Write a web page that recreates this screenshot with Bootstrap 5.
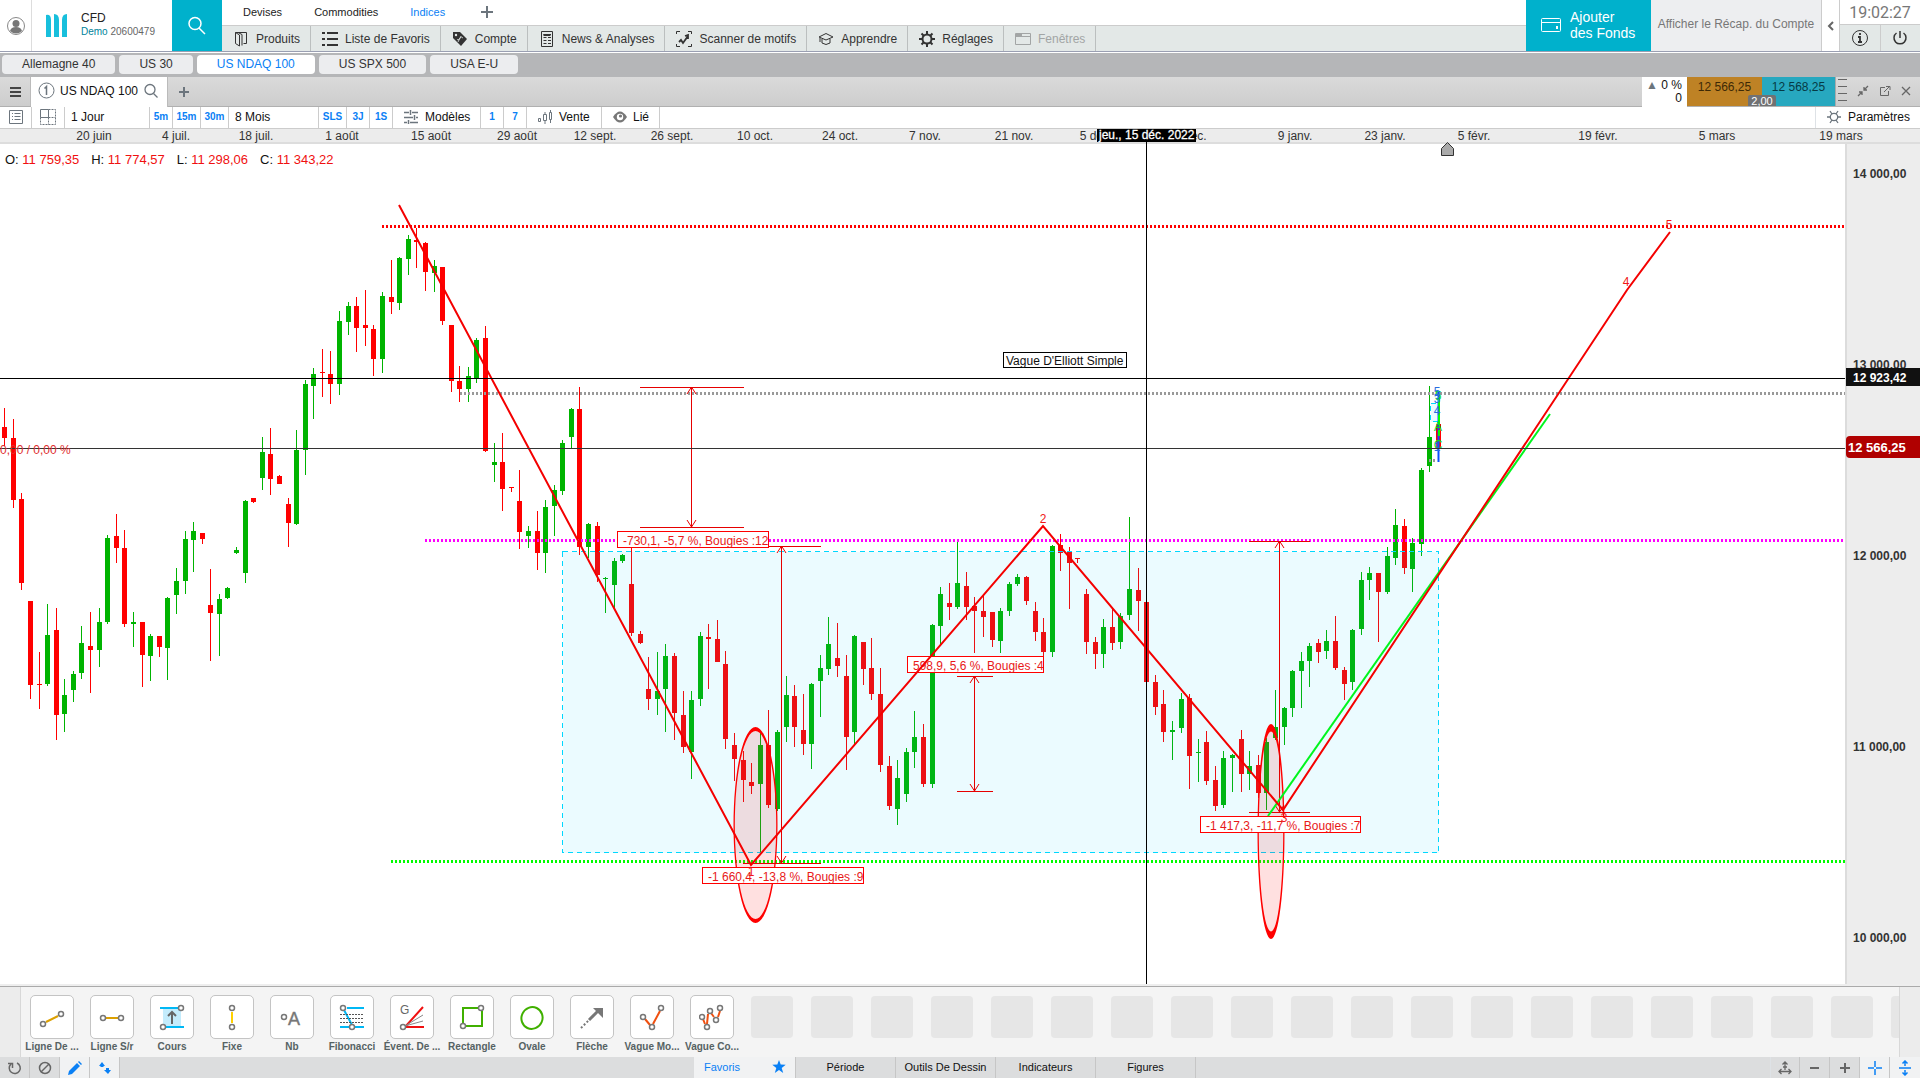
<!DOCTYPE html>
<html lang="fr">
<head>
<meta charset="utf-8">
<meta name="viewport" content="width=device-width, initial-scale=1">
<title>US NDAQ 100 - CFD</title>
<link href="https://cdn.jsdelivr.net/npm/bootstrap@5.3.0/dist/css/bootstrap.min.css" rel="stylesheet">
<style>
body{font-family:"Liberation Sans",Arial,sans-serif;font-size:12px;line-height:16px;color:#222;background:#fff;height:100vh;overflow:hidden}
button,select,a{font:inherit;color:inherit;text-decoration:none}
button{background:none;border:0;padding:0}
svg{display:block;flex:none}
.ln{fill:none;stroke:currentColor}
.top-head{height:53px;border-bottom:1px solid #fff;box-shadow:inset 0 -1px #9a9fb2;padding-bottom:1px}
.user-cell{width:32px;border-right:1px solid #ddd;color:#888}
.brand-cell{width:140px;padding:0 0 4px 14px;gap:13px}
.acct{font-size:10px;line-height:12px;color:#666}.acct b{font-weight:400;color:#00839b}
.aqua{background:#00b1cc;color:#fff}
.find-cell{width:50px}
.cat-row{height:26px;border-bottom:1px solid #ccc;font-size:11px;padding:0 21px 2px;gap:32px}
.menu-row{background:#e3e8e7;height:25px}
.menu-row>button{padding:0 10px 0 11px;gap:7px;border-right:1px solid #bbbfbf;color:#333}
.menu-row .off{color:#a2a5a5}
.azure{color:#0a80f5!important}
.fund{width:125px;padding:0 0 2px 15px;font-size:14px;line-height:16px;text-align:left;gap:9px}
.recap{width:171px;background:#edeef0;color:#777;border-right:1px solid #ccc!important;padding-bottom:3px!important}
.chev{width:18px;color:#666;border-right:1px solid #ccc!important}
.clock-col{width:80px}
.clock{height:25px;font:16px Roboto,sans-serif;line-height:26px;color:#777;border-bottom:1px solid #ccc}
.clock-col .pair>button{background:#e3e8e7;color:#333}
.clock-col .pair>button+button{border-left:1px solid #ccc}
.desk{height:24px;background:#b5b6b8;padding:2px 2px 3px;gap:4px}
.desk>button{background:#ecedef;border-radius:4px;padding:0 20px 2px;color:#333}
.desk>button.now{background:#fff}
.win{height:30px;background:linear-gradient(#dadada,#cdcdcd);border-bottom:1px solid #b0b0b0}
.win>*{height:29px}
.burger{width:31px;border-right:1px solid #bbb!important;color:#444}
.win-tab{background:#fff;width:137px;height:30px!important;color:#111;padding:0 0 3px 7px;gap:5px;border-right:1px solid #bbb}
.chg{width:45px;background:#fff;line-height:13px;color:#111;padding:2px 5px 0 0;height:30px!important}
.bid,.ask{padding-bottom:9px!important}
.bid{width:75px;background:#be8225;color:#3d2905}.ask{width:73px;background:#27a8bf;color:#063a44}
.spread{right:144px;bottom:0;width:28px;height:11px!important;background:#707173;color:#fff;font-size:11px;line-height:12px;text-align:center;border-radius:2px 2px 0 0;z-index:2}
.win-ico{width:85px;border-left:1px solid #aaa;color:#666;padding:0 8px 2px 2px}
.bar{height:22px;border-bottom:1px solid #ccc;color:#111;background:#fff}
.bar>*{border:0;border-right:1px solid #ccc;height:21px;padding-bottom:2px}
.bar select{appearance:none;background:#fff;padding:0 6px 2px;outline:0;color:#111}
.mini{font-size:10px;font-weight:700;color:#0a80f5;text-align:center}
.w23{width:23px}.w28{width:28px}.w27{width:28px}
.chart-box{min-height:0}
.chart-box svg{width:100%;height:100%;overflow:hidden}
.ohlc{left:5px;top:23px;font-size:13px;gap:12px;color:#111}
.ohlc span span{color:#f01010}
.shelf{background:#f4f4f4;border-top:1px solid #aaa;box-shadow:0 -2px #eee;height:71px;margin-top:2px}
.edge{width:21px;background:#ececec;flex:none}
.edge-l{border-right:1px solid #d8d8d8}.edge-r{border-left:1px solid #d8d8d8}
.slots{padding:8px 0 0 1px}
.slot{width:60px;flex:none;font-size:10px;font-weight:700;color:#566263;line-height:12px;white-space:nowrap}
.slot i{display:flex;width:44px;height:44px;border:1px solid #c4c4c4;border-radius:5px;background:#fff;align-items:center;justify-content:center;margin-bottom:2px;font-style:normal}
.slot em{display:block;width:42px;height:42px;border-radius:4px;background:#e6e6e6;margin-top:1px}
.foot{height:21px;background:#dcddde;margin-bottom:2px;font-size:11px;color:#111}
.foot button{border-right:1px solid #c6c6c6;width:30px;color:#666}
.foot button.wide{width:100px;color:#111;padding-bottom:2px}
.foot button.fav{width:102px;padding:0 9px 2px 10px}
.foot .lit{background:#f1f2f3}
</style>
</head>
<body class="d-flex flex-column">
<header class="top-head d-flex">
  <button class="user-cell d-flex align-items-center justify-content-center" aria-label="Profil"><svg width="20" height="20"><circle class="ln" cx="10" cy="10" r="8.500"/><circle cx="10" cy="7.500" r="3.500" fill="#777"/><path d="M4 15q1-4 6-4t6 4q-6 5-12 0z" fill="#777"/></svg></button>
  <div class="brand-cell d-flex align-items-center">
    <svg class="mt-1" width="22" height="24" fill="#18bfdc"><path d="M0 1q5-1 5 5v17H0zM8 0q5 0 5 6v17H8zM21 0q-5 0-5 6v17h5z"/></svg>
    <div><div>CFD</div><div class="acct"><b>Demo</b> 20600479</div></div>
  </div>
  <button class="find-cell aqua d-flex align-items-center justify-content-center" aria-label="Rechercher"><svg width="20" height="20"><circle class="ln" cx="8" cy="7.500" r="6" stroke-width="1.500"/><path class="ln" d="M12 12l6 6" stroke-width="1.500"/></svg></button>
  <div class="flex-grow-1 d-flex flex-column">
    <nav class="cat-row d-flex align-items-center"><a href="#">Devises</a><a href="#">Commodities</a><a href="#" class="azure">Indices</a><button aria-label="Ajouter un onglet"><svg width="20" height="14" class="ln text-secondary" stroke-width="2"><path d="M10 1v12M4 7h12"/></svg></button></nav>
    <nav class="menu-row d-flex">
      <button class="d-flex align-items-center"><svg width="16" height="16" class="ln"><path d="M2.500 1.500h11v11h-3M2.500 1.500v11l4 2.500V4z M5 1.500l4 2v11"/></svg>Produits</button>
      <button class="d-flex align-items-center"><svg width="16" height="16" class="ln" stroke-width="2"><path d="M0 2h3M0 8h3M0 14h3M5 2h11M5 8h11M5 14h11"/></svg>Liste de Favoris</button>
      <button class="d-flex align-items-center"><svg width="16" height="16"><path d="M1 1h7l7 7-6 7-8-8z" fill="#333"/><circle cx="4" cy="4" r="1.200" fill="#e3e8e7"/><path d="M11 7q-2-2-3 0t-2 2q-1 0 0-1M9 5L6 11" stroke="#e3e8e7" fill="none" stroke-width=".8"/></svg>Compte</button>
      <button class="d-flex align-items-center"><svg width="16" height="16" class="ln"><path d="M2.500.5h11v15h-11zM4.500 3.500h3M9 3.500h3M4.500 6.500h3M9 6.500h3M4.500 9.500h3M9 9.500h3M4.500 12.500h3M9 12.500h3" /><path d="M4.500 4h7" stroke-width="2"/></svg>News &amp; Analyses</button>
      <button class="d-flex align-items-center"><svg width="16" height="16" class="ln"><path d="M.5 3V.5H4M12 .5h3.500V3M.5 13v2.500H4M12 15.500h3.500V13"/><path d="M3 11l2-2 2 3 5-7M9 5l3-1v4" stroke-width="1.800"/></svg>Scanner de motifs</button>
      <button class="d-flex align-items-center"><svg width="16" height="16" class="ln"><path d="M1 6l7-3.500L15 6 8 9zM4 8v4q4 3 8 0V8M2 7v4"/></svg>Apprendre</button>
      <button class="d-flex align-items-center"><svg width="16" height="16" class="ln"><circle cx="8" cy="8" r="4.500" stroke-width="2"/><path d="M8 0v3M8 13v3M0 8h3M13 8h3M2.500 2.500l2 2M11.500 11.500l2 2M13.500 2.500l-2 2M4.500 11.500l-2 2" stroke-width="2"/></svg>Réglages</button>
      <button class="off d-flex align-items-center" disabled><svg width="16" height="16" class="ln"><path d="M.5 2.500h15v11H.5zM.5 5.500h15"/><path d="M1 4h6" stroke-width="2"/></svg>Fenêtres</button>
    </nav>
  </div>
  <button class="fund aqua d-flex align-items-center"><svg width="20" height="16" class="ln"><rect x=".5" y="1.500" width="19" height="13" rx="1"/><path d="M0 5.500h20" /><path d="M15 10.500h2" stroke-width="3"/></svg><span>Ajouter<br>des Fonds</span></button>
  <button class="recap">Afficher le Récap. du Compte</button>
  <button class="chev d-flex align-items-center justify-content-center" aria-label="Replier"><svg width="8" height="10" class="ln" stroke-width="2"><path d="M6 1L2 5l4 4"/></svg></button>
  <div class="clock-col d-flex flex-column">
    <div class="clock text-center">19:02:27</div>
    <div class="pair d-flex flex-fill">
      <button class="flex-fill d-flex align-items-center justify-content-center" aria-label="Informations"><svg width="18" height="18" class="ln"><circle cx="9" cy="9" r="7.500"/><path d="M9 4v2M7 8h2v5M7 13h4" stroke-width="1.800"/></svg></button>
      <button class="flex-fill d-flex align-items-center justify-content-center" aria-label="Quitter"><svg width="18" height="18" class="ln" stroke-width="1.500"><path d="M9 2v7M5.500 4a6 6 0 1 0 7 0"/></svg></button>
    </div>
  </div>
</header>
<nav class="desk d-flex">
  <button>Allemagne 40</button><button>US 30</button><button class="now azure">US NDAQ 100</button><button>US SPX 500</button><button>USA E-U</button>
</nav>
<div class="win d-flex position-relative">
  <button class="burger d-flex align-items-center justify-content-center" aria-label="Menu"><svg width="11" height="12" class="ln" stroke-width="2"><path d="M0 2h11M0 6h11M0 10h11"/></svg></button>
  <div class="win-tab d-flex align-items-center"><svg width="17" height="17" class="ln text-secondary"><circle cx="8.500" cy="8.500" r="7.500"/><path d="M6.500 6.500l2-2V13" stroke-width="1.500"/></svg><span>US NDAQ 100</span><svg width="16" height="16" class="ln text-secondary" stroke-width="1.300"><circle cx="7" cy="6.500" r="5" /><path d="M10.500 10.500l4 4"/></svg></div>
  <button class="px-2" aria-label="Nouvel onglet"><svg width="16" height="14" class="ln text-secondary" stroke-width="2"><path d="M8 2v10M3 7h10"/></svg></button>
  <div class="chg ms-auto text-end"><span class="text-secondary">▲</span> 0 %<br>0</div>
  <button class="bid">12 566,25</button><button class="ask">12 568,25</button>
  <div class="win-ico d-flex align-items-center justify-content-between">
    <svg width="10" height="26" class="ln"><path d="M0 1.500h9M0 8.500h9M0 15.500h9M0 22.500h9"/></svg>
    <svg width="12" height="12" class="ln"><path d="M11 1L7 5M7 2v3h3M1 11l4-4M2 7h3v3" stroke-width="1.300"/></svg>
    <svg width="12" height="12" class="ln"><path d="M6 2.500H1.500v8h8V6M5 7l5-5M7 1.500h4V5"/></svg>
    <svg width="12" height="12" class="ln" stroke-width="1.300"><path d="M2 2l8 8M10 2l-8 8"/></svg>
  </div>
  <div class="spread position-absolute">2,00</div>
</div>
<div class="bar d-flex">
  <button class="d-flex align-items-center justify-content-center" style="width:32px" aria-label="Liste"><svg width="14" height="14" class="ln text-secondary"><path d="M.5.5h13v13H.5zM3 3.500h1M3 6.500h1M3 9.500h1M5.500 3.500h6M5.500 6.500h6M5.500 9.500h6"/></svg></button>
  <button class="d-flex align-items-center justify-content-center" style="width:33px" aria-label="Grille"><svg width="16" height="16" class="ln text-secondary"><path d="M.5.5h8v8h-8z"/><path d="M8.500.5h7v15H.5v-7M8.500 8.500v7M8.500 8.500h7" stroke-dasharray="2 1"/></svg></button>
  <select aria-label="Intervalle" style="width:85px"><option>1 Jour</option></select>
  <button class="mini w23">5m</button><button class="mini w28">15m</button><button class="mini w28">30m</button>
  <select aria-label="Période" style="width:90px"><option>8 Mois</option></select>
  <button class="mini w27">SLS</button><button class="mini w23">3J</button><button class="mini w23">1S</button>
  <button class="d-flex align-items-center" style="width:88px;padding-left:11px;gap:5px"><svg width="16" height="14" class="ln text-secondary" stroke-width="1.500"><path d="M0 2.500h5M8 2.500h6M0 7.500h9M12 7.500h2M0 12.500h3M6 12.500h8M6.500 0v5M10.500 5v5M4.500 10v4"/></svg>Modèles</button>
  <button class="mini w23">1</button><button class="mini w23">7</button>
  <button class="d-flex align-items-center" style="width:75px;padding-left:10px;gap:6px"><svg width="16" height="14" class="ln text-secondary"><path d="M1.500 8.500h2v3h-2zM6.500 4.500h3v6h-3zM12.500 2.500h2v7h-2zM8 2v2M8 11v3M13.500 0v2M13.500 10v3"/></svg>Vente</button>
  <button class="d-flex align-items-center" style="width:58px;padding-left:11px;gap:6px"><svg width="14" height="12"><path d="M0 6q7-11 14 0-7 11-14 0z" fill="#777"/><circle cx="7" cy="6" r="3.200" fill="#fff"/><circle cx="7.500" cy="5" r="1.600" fill="#777"/></svg>Lié</button>
  <button class="ms-auto border-end-0 border-start d-flex align-items-center" style="width:105px;padding-left:11px;gap:7px"><svg width="14" height="14" class="ln text-secondary" stroke-width="1.300"><circle cx="7" cy="7" r="3.700"/><path d="M0 7h3M11 7h3M3 1l2 3M11 1L9 4M3 13l2-3M11 13l-2-3"/></svg>Paramètres</button>
</div>
<main class="chart-box flex-grow-1 position-relative">
  <svg id="plot" viewBox="0 129 1920 855" preserveAspectRatio="xMinYMin meet" font-family="Liberation Sans, Arial, sans-serif" font-size="12">
    <rect y="129" width="1920" height="13" fill="#ececec"/><rect y="142" width="1920" height="2" fill="#ddd"/>
    <g id="dates" text-anchor="middle" fill="#333"></g>
    <rect x="1845" y="144" width="75" height="840" fill="#ededed"/><rect x="1845" y="144" width="2" height="840" fill="#dcdcdc"/>
    <g id="prices" font-weight="700" fill="#333"></g>
    <g id="candles" shape-rendering="crispEdges"></g>
    <g fill="none" stroke-width="3" stroke-dasharray="2 2" shape-rendering="crispEdges">
      <path d="M382 226.500H1845" stroke="#f00"/><path d="M460 393.500H1845" stroke="#999"/><path d="M425 540.500H1845" stroke="#f0f"/><path d="M391 861.500H1845" stroke="#0f0"/><path d="M1429 460.500h7" stroke="#999"/>
    </g>
    <g stroke="#00d8ff" fill="#00d0ff" fill-opacity=".08" shape-rendering="crispEdges"><rect x="562.500" y="551.500" width="876" height="301" stroke-dasharray="5 4"/><rect x="1430.500" y="403.500" width="8" height="18" stroke-dasharray="5 4"/></g>
    <g fill="#f00"><ellipse cx="755.500" cy="825" rx="21" ry="96" fill-opacity=".12"/><ellipse cx="1271" cy="831.500" rx="13" ry="104" fill-opacity=".12"/>
      <path fill-rule="evenodd" d="M733.500 825a22 98 0 1 0 44 0a22 98 0 1 0-44 0zM734.800 825a20.700 94 0 1 1 41.400 0a20.700 94 0 1 1-41.400 0z"/>
      <path fill-rule="evenodd" d="M1257.500 831.500a13.500 107.500 0 1 0 27 0a13.500 107.500 0 1 0-27 0zM1258.800 831.500a12.200 100 0 1 1 24.400 0a12.200 100 0 1 1-24.400 0z"/></g>
    <g id="rulers" stroke="#e60000" fill="none"></g>
    <g id="notes"></g>
    <path d="M1268 816L1550 414" stroke="#00f51e" stroke-width="2"/>
    <path d="M399 205L751 865L1043 526L1283 810L1627 290L1670 232" fill="none" stroke="#f40000" stroke-width="2"/>
    <g fill="#f01818" text-anchor="middle"><text x="751" y="876">1</text><text x="1043" y="523">2</text><text x="1284" y="822">3</text><text x="1626" y="286">4</text><text x="1669" y="229">5</text></g>
    <path d="M1438.500 392v70" stroke="#0a50ff" stroke-width="2"/><path d="M1439 397v28M1439 430v6" stroke="#0f0" stroke-width="2"/>
    <g text-anchor="middle" font-size="12"><g fill="#00e020"><text x="1438" y="400">5</text><text x="1438" y="431">A</text><text x="1438" y="449">C</text></g><g fill="#2a6de0"><text x="1437" y="396">5</text><text x="1437" y="403">3</text><text x="1437" y="415">4</text><text x="1437" y="451">1</text></g></g>
    <path d="M0 378.500H1845" stroke="#000"/><path d="M0 448.500H1845" stroke="#333"/>
    <text x="0" y="454" fill="#e03030">0,00 / 0,00 %</text>
    <path d="M1146.500 142V984" stroke="#000"/><rect x="1097" y="129" width="99" height="13"/><text x="1099" y="139" fill="#fff" stroke="#fff" stroke-width=".3">jeu., 15 déc. 2022</text>
    <path d="M1441.500 155.500v-7l6-6 6 6v7z" fill="#aaa" stroke="#333"/>
    <rect x="1846" y="368" width="74" height="18" fill="#111"/><rect x="1846" y="436" width="78" height="22" rx="4" fill="#b00000"/>
    <g fill="#fff" font-weight="700"><text x="1853" y="382">12 923,42</text><text x="1848" y="452" font-size="13">12 566,25</text></g>
  </svg>
  <div class="ohlc position-absolute d-flex"><span>O: <span>11 759,35</span></span><span>H: <span>11 774,57</span></span><span>L: <span>11 298,06</span></span><span>C: <span>11 343,22</span></span></div>
</main>
<section class="shelf d-flex"><div class="edge edge-l"></div><div id="slots" class="slots d-flex flex-grow-1 overflow-hidden"></div><div class="edge edge-r"></div></section>
<footer class="foot d-flex">
  <button class="d-flex align-items-center justify-content-center" aria-label="Rétablir"><svg width="14" height="14" class="ln" stroke-width="1.500"><path d="M3 3a5.500 5.500 0 1 0 6-1M0 2.500h4.500V7"/></svg></button>
  <button class="d-flex align-items-center justify-content-center" aria-label="Masquer"><svg width="14" height="14" class="ln" stroke-width="1.500"><circle cx="7" cy="7" r="5.500"/><path d="M3 11l8-8"/></svg></button>
  <button class="lit azure d-flex align-items-center justify-content-center" aria-label="Dessiner"><svg width="14" height="14" fill="currentColor"><path d="M0 14l1-4 8-8 3 3-8 8zM10 1l1-1 3 3-1 1z"/></svg></button>
  <button class="lit azure d-flex align-items-center justify-content-center" aria-label="Ordre"><svg width="14" height="14" fill="currentColor"><path d="M1 5l3-4 3 4zM2.500 5h3v1h-3zM6 9l4 4 3-4zM8 7h3v2H8z"/></svg></button>
  <div class="flex-grow-1" style="max-width:574px"></div>
  <button class="wide fav lit azure d-flex align-items-center justify-content-between">Favoris<svg width="14" height="13" fill="currentColor"><path d="M7 0l1.700 4.600 5 .2-4 3.100 1.500 5L7 10l-4.200 2.900 1.500-5-4-3.100 5-.2z"/></svg></button>
  <button class="wide">Période</button><button class="wide">Outils De Dessin</button><button class="wide">Indicateurs</button><button class="wide">Figures</button>
  <button class="ms-auto border-start d-flex align-items-center justify-content-center" aria-label="Ajuster"><svg width="14" height="14" class="ln" stroke-width="1.300"><path d="M7 1v8M4.500 3.500L7 1l2.500 2.500M5 6h4M1 10.500h12M3.500 8L1 10.500 3.500 13M10.500 8l2.500 2.500-2.500 2.500"/></svg></button>
  <button class="d-flex align-items-center justify-content-center" aria-label="Zoom arrière"><svg width="12" height="12" class="ln" stroke-width="2"><path d="M1 6h9"/></svg></button>
  <button class="d-flex align-items-center justify-content-center" aria-label="Zoom avant"><svg width="12" height="12" class="ln" stroke-width="2"><path d="M1 6h10M6 1v10"/></svg></button>
  <button class="lit azure d-flex align-items-center justify-content-center" aria-label="Réticule"><svg width="14" height="14" class="ln" stroke-width="1.500"><path d="M0 7h6M8 7h6M7 0v6M7 8v6"/></svg></button>
  <button class="lit azure d-flex align-items-center justify-content-center border-end-0" aria-label="Étirer"><svg width="14" height="16" class="ln" stroke-width="1.500"><path d="M1 8h12M7 1v5M7 10v5M4.500 3.500L7 1l2.500 2.500M4.500 12.500L7 15l2.500-2.500"/></svg></button>
</footer>
<script src="https://cdn.jsdelivr.net/npm/bootstrap@5.3.0/dist/js/bootstrap.bundle.min.js"></script>
<script>
// Each candle: x, high, body top, body bottom, low, colour (r = down, g = up)
const candles = `4 408 427 438 446 r;13 419 438 500 508 r;21 493 499 583 590 r;30 601 601 685 699 r;39 652 684 685 709 r;47 604 635 684 686 g;56 608 630 715 740 r;64 679 695 714 732 g;73 671 674 690 702 g;81 626 643 673 679 g;90 612 646 650 693 r;99 608 622 650 667 g;107 535 538 622 624 g;116 514 536 548 563 r;124 530 548 624 627 r;133 612 622 624 647 g;142 622 622 655 687 r;150 634 636 656 681 g;159 636 636 647 657 r;167 597 598 648 680 g;176 568 581 595 614 g;185 531 539 581 594 g;193 522 531 540 572 g;202 533 533 539 544 r;210 569 605 613 661 r;219 594 599 614 656 g;227 587 588 598 599 g;236 547 550 553 554 g;245 500 501 573 583 g;253 498 498 502 503 r;262 437 452 478 490 g;270 428 454 479 495 r;279 475 476 484 484 r;288 498 504 523 547 r;296 430 450 524 525 g;305 380 384 450 475 g;313 368 374 386 419 g;322 349 372 373 397 r;330 351 374 384 404 r;339 311 321 384 395 g;348 302 306 322 335 g;356 297 306 328 352 r;365 290 325 328 346 r;373 325 329 359 376 r;382 292 296 359 373 g;391 260 297 302 314 r;399 257 258 303 310 g;408 235 239 259 275 g;416 228 240 242 268 r;425 242 243 272 291 r;434 260 266 273 292 g;442 267 267 321 325 r;451 325 325 381 392 r;459 366 381 389 402 r;468 367 376 389 402 g;476 338 340 378 383 g;485 326 338 451 452 r;494 443 462 465 482 g;502 433 462 489 511 r;511 487 487 488 492 r;519 470 501 532 549 r;528 526 531 536 548 g;537 511 531 553 570 r;545 500 507 553 573 g;554 485 490 506 536 g;562 440 443 491 495 g;571 408 409 437 448 g;579 387 409 547 555 r;588 523 524 547 558 g;597 522 526 575 582 r;605 577 578 579 613 g;614 558 561 585 609 g;622 554 555 561 563 g;631 548 584 633 636 r;640 631 634 643 644 r;648 657 689 699 710 r;657 652 691 699 715 g;665 644 656 689 732 g;674 653 656 713 740 r;683 691 715 747 753 r;691 691 700 752 779 g;700 632 636 699 706 g;708 624 637 639 689 r;717 620 639 662 662 r;725 651 664 739 749 r;734 733 745 759 781 r;743 751 760 780 802 r;751 763 782 786 794 r;760 732 745 784 853 g;768 710 745 805 808 r;777 730 732 809 811 g;786 676 695 727 742 g;794 685 696 727 747 r;803 694 730 744 755 r;811 683 684 744 769 g;820 655 668 681 717 g;828 617 644 669 675 g;837 623 658 666 677 r;846 655 676 737 770 r;854 635 636 732 745 g;863 642 642 669 685 r;871 638 668 694 700 r;880 668 694 765 772 r;889 756 766 806 810 r;897 760 778 809 825 g;906 748 752 794 802 g;914 711 737 752 768 g;923 724 737 784 787 r;932 624 625 784 788 g;940 587 594 626 644 g;949 583 603 607 620 r;957 541 583 607 609 g;966 572 586 607 620 r;974 597 606 611 653 r;983 595 611 617 637 r;992 612 612 640 647 r;1000 608 611 641 653 g;1009 582 584 611 616 g;1017 574 577 584 586 g;1026 576 577 601 605 r;1035 602 611 632 641 r;1043 618 632 652 656 r;1052 545 546 652 657 g;1060 534 545 553 571 r;1069 547 552 563 609 r;1077 558 558 559 563 r;1086 589 594 642 654 r;1095 637 642 654 669 r;1103 619 627 654 668 g;1112 608 627 643 650 r;1120 613 616 642 649 g;1129 517 589 615 620 g;1138 568 590 601 631 r;1146 602 602 682 682 r;1155 675 682 707 715 r;1163 690 704 732 742 r;1172 721 730 732 760 g;1181 693 699 728 733 g;1189 694 698 756 789 r;1198 739 752 753 782 g;1206 731 742 781 785 r;1215 766 780 806 811 r;1223 751 758 805 808 g;1232 754 755 758 792 g;1241 730 739 774 792 r;1249 751 766 774 790 g;1258 755 765 793 798 r;1266 738 742 793 810 g;1275 690 727 738 740 g;1284 707 708 727 745 g;1292 670 671 708 717 g;1301 652 661 671 708 g;1309 643 646 661 687 g;1318 639 643 652 663 r;1326 630 641 651 659 g;1335 616 641 668 670 r;1344 667 670 684 700 r;1352 629 630 682 690 g;1361 572 580 629 635 g;1369 567 573 580 600 g;1378 573 573 592 642 r;1387 547 556 592 594 g;1395 509 525 558 565 g;1404 519 526 568 574 r;1412 538 543 569 592 g;1421 468 470 544 556 g;1429 386 437 466 472 g;1438 424 424 448 448 r`;
const $ = id => document.getElementById(id);
$('candles').innerHTML = candles.split(';').map(row => {
  const [x, hi, top, bot, lo, c] = row.split(' ');
  const fill = c === 'r' ? '#f00' : '#00b400';
  return `<path fill="${fill}" d="M${x} ${hi}h1V${lo}h-1zM${x - 2} ${top}h5V${Math.max(bot, +top + 1)}h-5z"/>`;
}).join('');
$('dates').innerHTML = [[94,'20 juin'],[176,'4 juil.'],[256,'18 juil.'],[342,'1 août'],[431,'15 août'],[517,'29 août'],[595,'12 sept.'],[672,'26 sept.'],[755,'10 oct.'],[840,'24 oct.'],[925,'7 nov.'],[1014,'21 nov.'],[1096,'5 déc.'],[1187,'19 déc.'],[1295,'9 janv.'],[1385,'23 janv.'],[1474,'5 févr.'],[1598,'19 févr.'],[1717,'5 mars'],[1841,'19 mars']]
  .map(([x, t]) => `<text x="${x}" y="140">${t}</text>`).join('');
$('prices').innerHTML = [14, 13, 12, 11, 10].map((p, i) => `<text x="1853" y="${178 + 191 * i}">${p} 000,00</text>`).join('');
// Price rulers: left, right, arrow x, top, bottom
$('rulers').innerHTML = [[640,744,691,387,527],[743,821,781,546,863],[957,993,974,676,791],[1249,1310,1279,541,812]]
  .map(([l, r, x, t, b]) => `<path d="M${l} ${t}.5H${r}M${l} ${b}.5H${r}M${x}.5 ${t}V${b}M${x - 4} ${t + 7}l4.500-7 4.500 7M${x - 4} ${b - 7}l4.500 7 4.500-7"/>`).join('');
$('notes').innerHTML = [[617,531,151,'-730,1, -5,7 %, Bougies :12'],[702,867,161,'-1 660,4, -13,8 %, Bougies :9'],[907,656,136,'598,9, 5,6 %, Bougies :4'],[1200,816,160,'-1 417,3, -11,7 %, Bougies :7']]
  .map(([x, y, w, t]) => `<rect x="${x}.5" y="${y}.5" width="${w}" height="16" fill="#fff" stroke="#f00"/><text x="${x + 6}" y="${y + 14}" fill="#e81818">${t}</text>`).join('')
  + `<rect x="1003.500" y="352.500" width="123" height="15" fill="#fff" stroke="#000"/><text x="1006" y="365" fill="#111">Vague D'Elliott Simple</text>`;
const ring = (x, y) => `<circle cx="${x}" cy="${y}" r="2.500" fill="#fff" stroke="#777" stroke-width="1.500"/>`;
const line = (d, c, w = 2) => `<path d="${d}" fill="none" stroke="${c}" stroke-width="${w}"/>`;
const tools = [
  ['Ligne De ...', line('M7 18L19 12', '#dca000') + ring(4, 20) + ring(22, 10)],
  ['Ligne S/r', line('M7 14H19', '#dca000') + ring(4, 14) + ring(22, 14)],
  ['Cours', '<path d="M4 4h18v18H4z" fill="#c4ecfc"/>' + line('M1 4H19M7 23H25', '#00b8f5') + line('M13 20V8M9 12L13 8L17 12', '#666') + ring(4, 23) + ring(22, 4)],
  ['Fixe', line('M13 8V19', '#ffd000') + ring(13, 4) + ring(13, 23)],
  ['Nb', ring(5, 13) + '<text x="9" y="21" font-size="18" font-family="Liberation Sans, sans-serif" font-weight="400" fill="#777" stroke="#777" stroke-width=".4">A</text>'],
  ['Fibonacci', line('M8 4H25M1 23H25M5 6L13 21', '#00b8f5') + '<path d="M1 10.500h24M1 14.500h24M1 18.500h24" stroke="#555" stroke-dasharray="2 1"/>' + ring(4, 4) + ring(13, 23)],
  ['Évent. De ...', line('M6 23L24 3M6 23H25', '#f01010') + line('M6 22L24 11M6 22L24 17', '#888', 1) + '<text x="1" y="10" font-size="12" font-family="Liberation Sans, sans-serif" font-weight="400" fill="#666">G</text>' + ring(4, 23)],
  ['Rectangle', line('M4 20V4H20M23 6V22H6', '#40b000') + ring(4, 22) + ring(22, 4)],
  ['Ovale', '<ellipse cx="13" cy="14" rx="10.500" ry="11" transform="rotate(25 13 14)" fill="none" stroke="#40b000" stroke-width="2"/>'],
  ['Flèche', line('M10 16L20 6', '#777', 3) + '<path d="M14 4h10v10z" fill="#777"/><path d="M2 24l8-8" stroke="#777" stroke-width="2" stroke-dasharray="2 2"/>'],
  ['Vague Mo...', line('M6 15L11 21M14 20L21 7', '#f05010') + ring(4, 13) + ring(13, 23) + ring(22, 4)],
  ['Vague Co...', line('M4 15L6 20M8 20L9 10M12 9L15 13M19 13L21 7', '#f05010') + ring(3, 13) + ring(8, 23) + ring(11, 7) + ring(17, 16) + ring(21, 4)]
];
$('slots').innerHTML = tools.map(([name, art]) => `<button class="slot d-flex flex-column align-items-center"><i><svg width="26" height="27">${art}</svg></i>${name}</button>`).join('')
  + '<div class="slot d-flex flex-column align-items-center"><em></em></div>'.repeat(20);
</script>
</body>
</html>
